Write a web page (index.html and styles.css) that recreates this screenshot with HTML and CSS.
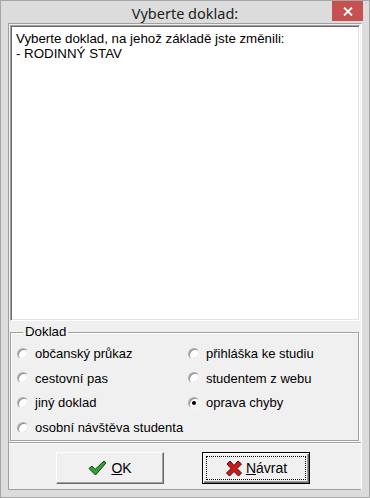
FILE: index.html
```html
<!DOCTYPE html>
<html>
<head>
<meta charset="utf-8">
<link rel="stylesheet" href="styles.css">
</head>
<body>
<div class="window">
  <div class="titlebar">
    <span class="title">Vyberte doklad:</span>
    <div class="close">
      <svg width="10" height="9" viewBox="0 0 10 9"><path d="M1 0.5 L9 8.5 M9 0.5 L1 8.5" stroke="#fff" stroke-width="1.8"/></svg>
    </div>
  </div>
  <div class="client">
    <div class="toppanel">
      <div class="memo">
        <div>Vyberte doklad, na jehož základě jste změnili:</div>
        <div>- RODINNÝ STAV</div>
      </div>
      <fieldset class="group">
        <legend>Doklad</legend>
        <div class="radios">
          <label class="opt"><span class="radio"></span>občanský průkaz</label>
          <label class="opt"><span class="radio"></span>přihláška ke studiu</label>
          <label class="opt"><span class="radio"></span>cestovní pas</label>
          <label class="opt"><span class="radio"></span>studentem z webu</label>
          <label class="opt"><span class="radio"></span>jiný doklad</label>
          <label class="opt"><span class="radio checked"></span>oprava chyby</label>
          <label class="opt wide"><span class="radio"></span>osobní návštěva studenta</label>
        </div>
      </fieldset>
    </div>
    <div class="bottompanel">
      <div class="btn">
        <svg class="ico" width="19" height="16" viewBox="0 0 19 16"><path d="M1 8.5 L4 6 L7 9.5 L16 1 L18 3 L7.5 15 Z" fill="#2fa52f" stroke="#153a15" stroke-width="1" stroke-linejoin="round"/></svg>
        <span><u>O</u>K</span>
      </div>
      <div class="btn default">
        <div class="focus">
          <svg class="ico" width="18" height="17" viewBox="0 0 18 17"><path d="M2 4 L5 1 L9 5.5 L13 1 L16.5 4 L12 8.5 L16.5 13 L13.5 16 L9 11.5 L4.5 16 L1.5 13 L6 8.5 Z" fill="#cc1a1a" stroke="#4a0606" stroke-width="1" stroke-linejoin="round"/></svg>
          <span><u>N</u>ávrat</span>
        </div>
      </div>
    </div>
  </div>
</div>
</body>
</html>
```
FILE: styles.css
```css
html, body {
  margin: 0;
  padding: 0;
  background: #dadada;
}
.window {
  width: 370px;
  height: 498px;
  box-sizing: border-box;
  border: 1px solid #a6a6a6;
  background: #dcdcdc;
  display: flex;
  flex-direction: column;
  font-family: "Liberation Sans", Arial, sans-serif;
  font-size: 13px;
  color: #000;
}
.titlebar {
  height: 29px;
  position: relative;
  display: flex;
  align-items: center;
  justify-content: center;
}
.title {
  font-family: "Noto Sans", "Open Sans", sans-serif;
  font-size: 14.5px;
  color: #222;
  margin-top: 2px;
}
.close {
  position: absolute;
  top: 0;
  right: 6px;
  width: 31px;
  height: 20px;
  background: #c75050;
  display: flex;
  align-items: center;
  justify-content: center;
}
.client {
  margin: 0 7px 7px 7px;
  flex: 1;
  background: #f0f0f0;
  display: flex;
  flex-direction: column;
  border-left: 1px solid #a0a0a0;
  border-top: 1px solid #a0a0a0;
  border-right: 1px solid #fff;
}
.toppanel {
  flex: 1;
  display: flex;
  flex-direction: column;
  padding: 1px 1px 0 1px;
  border-bottom: 1px solid #a0a0a0;
}
.memo {
  height: 284px;
  background: #fff;
  border: 1px solid;
  border-color: #a0a0a0 #fff #fff #a0a0a0;
  box-shadow: inset 1px 1px 0 #696969, inset -1px -1px 0 #e3e3e3;
  padding: 5px 5px;
  line-height: 15px;
  font-size: 13.3px;
}
.group {
  margin: 4px 1px 1px 0;
  padding: 1px 0 0 6px;
  border: 1px solid #a0a0a0;
  box-shadow: 1px 1px 0 #fff, inset 1px 1px 0 #fff;
  flex: 1;
  min-width: 0;
}
.group legend {
  padding: 0 2px;
  margin-left: 6px;
  line-height: 14px;
  font-size: 13.3px;
}
.radios {
  display: grid;
  grid-template-columns: 171px 1fr;
  grid-auto-rows: 24.7px;
  align-items: center;
  margin-top: 1px;
}
.opt {
  display: flex;
  align-items: center;
  gap: 6px;
  white-space: nowrap;
}
.radio {
  width: 10px;
  height: 10px;
  border-radius: 50%;
  border: 1px solid;
  border-color: #b0b0b0 #f4f4f4 #f4f4f4 #b0b0b0;
  box-shadow: inset 1px 1px 0 #8a8a8a, inset -1px -1px 0 #e6e6e6;
  background: #fff;
  position: relative;
  flex: none;
}
.radio.checked::after {
  content: "";
  position: absolute;
  left: 3px;
  top: 3px;
  width: 4px;
  height: 4px;
  border-radius: 50%;
  background: #000;
}
.bottompanel {
  height: 47px;
  box-sizing: border-box;
  border-top: 1px solid #fff;
  border-bottom: 1px solid #a0a0a0;
  display: flex;
  align-items: flex-start;
  padding: 8px 0 0 47px;
  gap: 38px;
}
.btn {
  width: 108px;
  height: 32px;
  box-sizing: border-box;
  background: #f0f0f0;
  border: 1px solid;
  border-color: #fff #696969 #696969 #fff;
  box-shadow: inset -1px -1px 0 #a0a0a0;
  display: flex;
  align-items: center;
  justify-content: center;
  gap: 4px;
  font-size: 14px;
}
.btn .ico {
  flex: none;
}
.btn.default {
  border: 1px solid #000;
  box-shadow: inset 1px 1px 0 #fff, inset -1px -1px 0 #696969, inset -2px -2px 0 #a0a0a0;
  padding: 3px;
}
.focus {
  flex: 1;
  align-self: stretch;
  border: 1px dotted #000;
  display: flex;
  align-items: center;
  justify-content: center;
  gap: 3px;
}
```
